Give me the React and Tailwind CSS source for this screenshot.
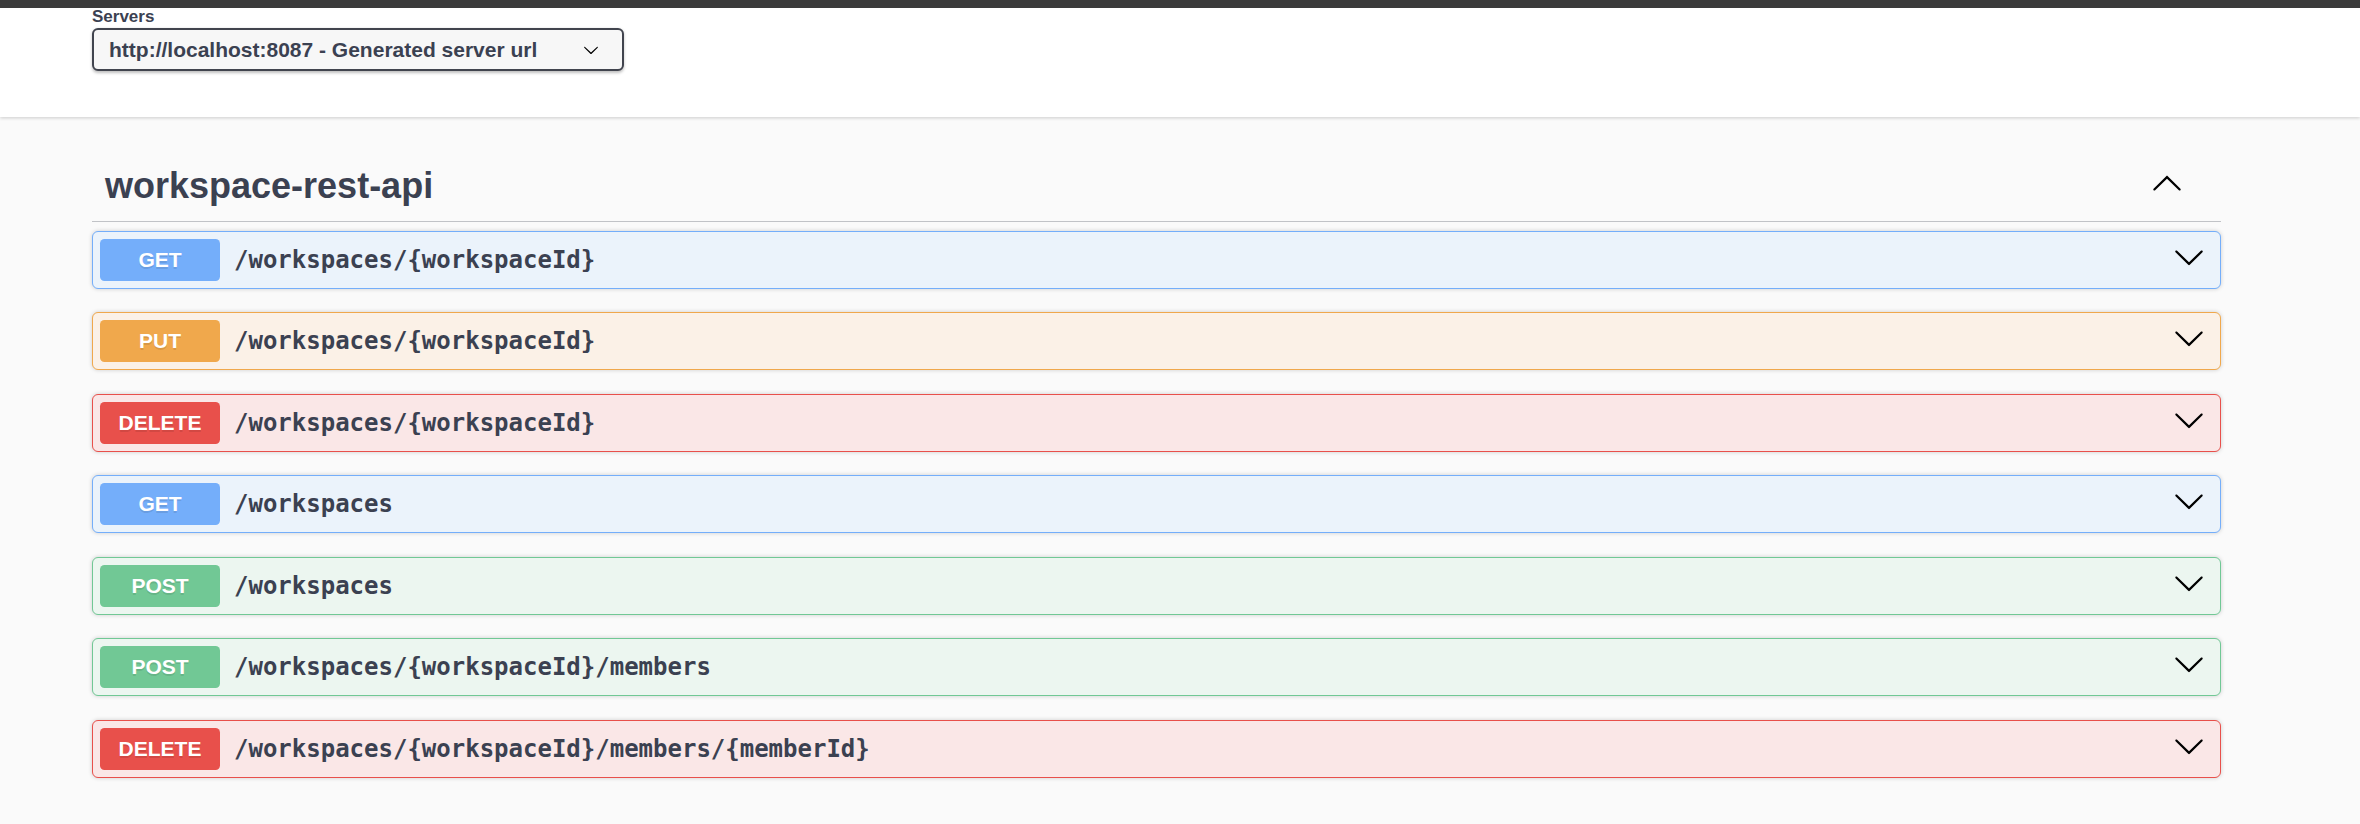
import React from 'react'

const ops = [
  { method: 'GET', path: '/workspaces/{workspaceId}' },
  { method: 'PUT', path: '/workspaces/{workspaceId}' },
  { method: 'DELETE', path: '/workspaces/{workspaceId}' },
  { method: 'GET', path: '/workspaces' },
  { method: 'POST', path: '/workspaces' },
  { method: 'POST', path: '/workspaces/{workspaceId}/members' },
  { method: 'DELETE', path: '/workspaces/{workspaceId}/members/{memberId}' },
]

const styles = {
  GET: { block: 'bg-[#ebf3fb] border-[#74aefa]', badge: 'bg-[#74aefa]' },
  PUT: { block: 'bg-[#fbf1e7] border-[#f0a84c]', badge: 'bg-[#f0a84c]' },
  DELETE: { block: 'bg-[#fae7e7] border-[#e8504b]', badge: 'bg-[#e8504b]' },
  POST: { block: 'bg-[#ecf6f0] border-[#71c895]', badge: 'bg-[#71c895]' },
}

const arrowPath =
  'M17.418 6.109c.272-.268.709-.268.979 0s.271.701 0 .969l-7.908 7.83c-.27.268-.707.268-.979 0l-7.908-7.83c-.27-.268-.27-.701 0-.969.271-.268.709-.268.979 0L10 13.25l7.418-7.141z'

function Arrow({ size = 32, up = false, className = '' }) {
  return (
    <svg
      width={size}
      height={size}
      viewBox="0 0 20 20"
      className={className + (up ? ' rotate-180' : '')}
      fill="#000"
    >
      <path d={arrowPath} />
    </svg>
  )
}

function OpBlock({ method, path }) {
  const s = styles[method]
  return (
    <div
      className={`flex items-center h-[58px] mb-[23.5px] border rounded-[6px] shadow-[0_0_4.5px_rgba(0,0,0,0.19)] pl-[7px] pr-[15px] ${s.block}`}
    >
      <div
        className={`w-[120px] h-[42px] rounded-[4.5px] flex items-center justify-center text-white text-[21px] font-bold [text-shadow:0_1.5px_0_rgba(0,0,0,0.1)] ${s.badge}`}
      >
        {method}
      </div>
      <span
        className="ml-[14px] text-[24px] font-bold text-[#3b4151]"
        style={{ fontFamily: '"DejaVu Sans Mono", monospace' }}
      >
        {path}
      </span>
      <div className="flex-1" />
      <Arrow className="-translate-y-[3px]" />
    </div>
  )
}

export default function App() {
  return (
    <div
      className="min-h-screen bg-[#fafafa] text-[#3b4151]"
      style={{ fontFamily: '"Liberation Sans", Arial, sans-serif' }}
    >
      <div className="h-[8px] bg-[#3b3b3b]" />

      <div className="bg-white h-[109px] pl-[92px] shadow-[0_1.5px_3px_0_rgba(0,0,0,0.15)] relative">
        <div className="text-[17px] leading-[18px] font-bold">Servers</div>
        <div className="mt-[2px] w-[532px] h-[43px] border-2 border-[#41444e] rounded-[6px] bg-[#f7f7f7] shadow-[0_1.5px_3px_0_rgba(0,0,0,0.25)] flex items-center pl-[15px] pr-[23px]">
          <span className="text-[21px] font-bold">http://localhost:8087 - Generated server url</span>
          <div className="flex-1" />
          <Arrow size={16} />
        </div>
      </div>

      <div className="pl-[92px] w-[2221px] pt-[30px]">
        <div className="flex items-center h-[75px] border-b border-[#c1c3c7] pl-[13px] pr-[38px]">
          <h3 className="text-[36px] leading-[36px] font-bold mt-[3px]">workspace-rest-api</h3>
          <div className="flex-1" />
          <Arrow up />
        </div>
        <div className="pt-[8.5px]">
          {ops.map((op, i) => (
            <OpBlock key={i} {...op} />
          ))}
        </div>
      </div>
    </div>
  )
}
